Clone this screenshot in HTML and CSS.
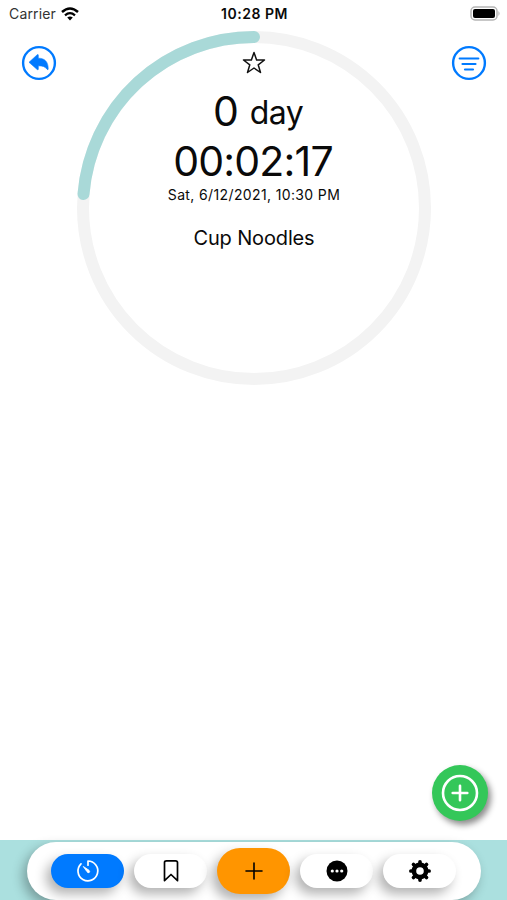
FILE: index.html
```
<!DOCTYPE html>
<html lang="en">
<head>
    <meta charset="utf-8">
    <title>Countdown</title>
    <link rel="stylesheet" href="styles.css">
</head>

<body>
    <div class="status-bar">
        <div class="carrier">
            <span>Carrier</span>
            <svg width="18" height="14" viewBox="0 0 18 14">
                <path d="M1 5 Q9 -2 17 5" fill="none" stroke="#000" stroke-width="2.500"/>
                <path d="M4 8.300 Q9 4 14 8.300" fill="none" stroke="#000" stroke-width="2.300"/>
                <path d="M6.200 10.600 Q9 8.300 11.800 10.600 L9 13.500 Z"/>
            </svg>
        </div>
        <div class="clock">10:28 PM</div>
        <div class="battery">
            <svg width="31" height="16" viewBox="0 0 31 16">
                <rect x="1" y="1" width="26" height="13" rx="4" fill="#fff" stroke="#b5b5b5" stroke-width="1.500"/>
                <rect x="3" y="3" width="22" height="9" rx="2"/>
                <path d="M28.500 5 Q30.500 7.500 28.500 10 Z" fill="#a5a5a5"/>
            </svg>
        </div>
    </div>

    <main class="timer">
        <button class="round-btn" aria-label="Back">
            <svg width="36" height="36" viewBox="0 0 36 36">
                <circle cx="18" cy="18" r="15.900" fill="none" stroke="#007aff" stroke-width="2.400"/>
                <path d="M8 17.300 L16.300 9.700 Q17.300 9 17.300 10.300 V13.200 C24 13.200 27.200 17 27.200 24 Q27 25.500 26 24.200 C24 21.500 21.500 20.800 17.300 20.800 V24 Q17.300 25.400 16.200 24.500 Z" fill="#007aff" stroke="#007aff" stroke-width=".6" stroke-linejoin="round"/>
            </svg>
        </button>

        <div class="dial">
            <svg class="ring" width="354" height="354" viewBox="0 0 354 354">
                <circle cx="177" cy="177" r="171" fill="none" stroke="#f3f3f3" stroke-width="12"/>
                <path d="M6.500 163 A171 171 0 0 1 177 6" fill="none" stroke="#a9d9d8" stroke-width="12" stroke-linecap="round"/>
            </svg>
            <div class="info">
                <svg class="star" width="24" height="24" viewBox="0 0 24 24">
                    <path d="M12 1.500 L14.600 9 H22.500 L16.200 13.800 L18.500 21.500 L12 17 L5.500 21.500 L7.800 13.800 L1.500 9 H9.400 Z" fill="none" stroke="#111" stroke-width="1.500" stroke-linejoin="round"/>
                </svg>
                <div class="days"><span class="num">0</span><span class="unit">day</span></div>
                <div class="time">00:02:17</div>
                <div class="date">Sat, 6/12/2021, 10:30 PM</div>
                <div class="name">Cup Noodles</div>
            </div>
        </div>

        <button class="round-btn" aria-label="Filter">
            <svg width="36" height="36" viewBox="0 0 36 36">
                <circle cx="18" cy="18" r="15.900" fill="none" stroke="#007aff" stroke-width="2.400"/>
                <path d="M8.700 13.500 H27.300 M11.500 19 H24.500 M14 24.500 H22" stroke="#007aff" stroke-width="2.200" stroke-linecap="round"/>
            </svg>
        </button>
    </main>

    <button class="add-btn" aria-label="Add timer">
        <svg width="38" height="38" viewBox="0 0 38 38" fill="none" stroke="#fff" stroke-linecap="round">
            <circle cx="19" cy="19" r="17" stroke-width="2.600"/>
            <path d="M19 11.700 V26.300 M11.700 19 H26.300" stroke-width="2.600"/>
        </svg>
    </button>

    <footer class="tab-area">
        <nav class="tabs">
            <button class="tab active" aria-label="Timer">
                <svg width="24" height="24" viewBox="0 0 24 24" fill="none" stroke="#fff" stroke-width="1.700" stroke-linecap="round" stroke-linejoin="round">
                    <path d="M5 4.800 A9.900 9.900 0 1 0 12 2 V6.200"/>
                    <path d="M7.600 7.700 L13 11.300 Q14.200 12.500 13.200 13.500 Q12 14.200 11.200 13 Z" fill="#fff" stroke-width=".9"/>
                </svg>
            </button>
            <button class="tab" aria-label="Bookmarks">
                <svg width="18" height="24" viewBox="0 0 18 24">
                    <path d="M2.500 3.500 Q2.500 1.800 4.500 1.800 H13.500 Q15.500 1.800 15.500 3.500 V21.700 L9 15.500 L2.500 21.700 Z" fill="none" stroke="#000" stroke-width="1.700" stroke-linejoin="round"/>
                </svg>
            </button>
            <button class="tab plus" aria-label="New">
                <svg width="18" height="18" viewBox="0 0 18 18">
                    <path d="M9 1 V17 M1 9 H17" stroke="#000" stroke-width="1.600" stroke-linecap="round"/>
                </svg>
            </button>
            <button class="tab" aria-label="More">
                <svg width="22" height="22" viewBox="0 0 22 22">
                    <circle cx="11" cy="11" r="10.500"/>
                    <g fill="#fff">
                        <circle cx="6.300" cy="11" r="1.600"/>
                        <circle cx="11" cy="11" r="1.600"/>
                        <circle cx="15.700" cy="11" r="1.600"/>
                    </g>
                </svg>
            </button>
            <button class="tab" aria-label="Settings">
                <svg width="22" height="22" viewBox="0 0 22 22">
                    <circle cx="11" cy="11" r="6.100" fill="none" stroke="#000" stroke-width="4.600"/>
                    <path d="M11 1.900 V4 M11 18 V20.100 M1.900 11 H4 M18 11 H20.100 M4.500 4.500 L6 6 M16 16 L17.500 17.500 M4.500 17.500 L6 16 M16 6 L17.500 4.500" stroke="#000" stroke-width="3.700" stroke-linecap="round"/>
                </svg>
            </button>
        </nav>
    </footer>
</body>
</html>
```
FILE: styles.css
```
body {
    display: flex;
    flex-direction: column;
    height: 100vh;
    margin: 0;
    overflow: hidden;
    background-color: #fff;
    color: #0a0a0a;
    font-family: Inter, "Liberation Sans", sans-serif;
}
button {
    padding: 0;
    border: none;
    background: none;
}
svg {
    display: block;
}

/* Status bar */
.status-bar {
    display: grid;
    grid-template-columns: 1fr auto 1fr;
    align-items: center;
    height: 27px;
    flex: none;
    padding: 0 6px 0 9px;
    font-size: 14px;
}
.carrier {
    display: flex;
    align-items: center;
    gap: 5px;
    color: #333;
    letter-spacing: 0.15px;
}
.clock {
    margin-right: 1px;
    font-weight: 600;
    letter-spacing: 0.5px;
}
.battery {
    justify-self: end;
}

/* Timer */
.timer {
    display: grid;
    grid-template-columns: 77px 354px 76px;
    align-items: start;
    justify-items: center;
    padding-top: 4px;
}
.round-btn {
    margin-top: 14px;
}
.dial {
    display: grid;
}
.ring,
.info {
    grid-area: 1 / 1;
}
.info {
    display: flex;
    flex-direction: column;
    align-items: center;
}
.star {
    margin-top: 20px;
}
.days {
    display: flex;
    align-items: center;
    gap: 11px;
    height: 50px;
    margin: 11px 0 0 8px;
    line-height: 50px;
}
.num {
    font-size: 41px;
}
.unit {
    padding-top: 3px;
    font-size: 32px;
    letter-spacing: -0.6px;
}
.time {
    margin-right: 2px;
    font-size: 41px;
    line-height: 50px;
    letter-spacing: -0.8px;
}
.date {
    font-size: 14px;
    line-height: 18px;
    letter-spacing: 0.37px;
}
.name {
    margin-top: 20px;
    font-size: 20px;
    line-height: 28px;
    letter-spacing: -0.15px;
}

/* Floating add button */
.add-btn {
    display: flex;
    align-items: center;
    justify-content: center;
    width: 56px;
    height: 56px;
    margin: auto 19px 19px auto;
    flex: none;
    border-radius: 50%;
    background-color: #34c759;
    box-shadow: 3px 4px 6px rgba(0, 0, 0, 0.45);
}

/* Bottom tabs */
.tab-area {
    height: 58px;
    flex: none;
    padding: 2px 26px 0 27px;
    background-color: #abe0df;
}
.tabs {
    display: flex;
    align-items: center;
    justify-content: center;
    gap: 10px;
    height: 58px;
    padding-right: 1px;
    border-radius: 29px;
    background-color: #fff;
    box-shadow: -4px 5px 12px rgba(0, 0, 0, 0.3);
}
.tab {
    display: flex;
    align-items: center;
    justify-content: center;
    width: 73px;
    height: 34px;
    border-radius: 17px;
    background-color: #fff;
    box-shadow: -5px 6px 12px rgba(0, 0, 0, 0.3);
}
.active {
    background-color: #007aff;
}
.plus {
    height: 46px;
    border-radius: 23px;
    background-color: #ff9500;
}
```
